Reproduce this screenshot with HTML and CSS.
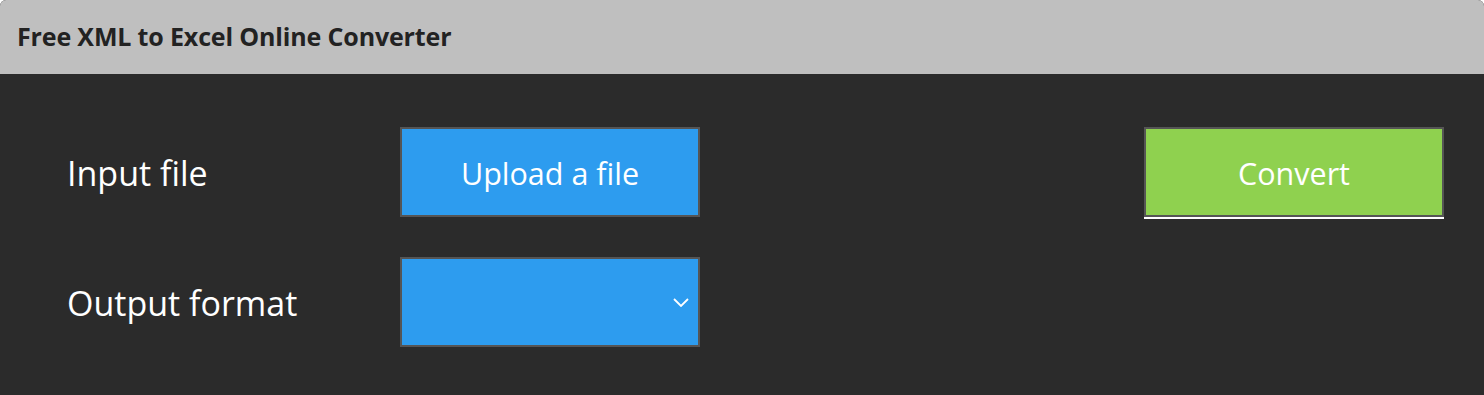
FILE: index.html
```html
<!DOCTYPE html>
<html lang="en">
<head>
  <meta charset="UTF-8" />
  <title>Free XML to Excel Online Converter</title>
  <link rel="stylesheet" href="styles.css">
</head>
<body>
  <div class="panel">
    <header class="panel-header">
      <h1>Free XML to Excel Online Converter</h1>
    </header>

    <div class="panel-body">
      <div class="form-grid">
        <label class="field-label">Input file</label>
        <button class="blue-button">Upload a file</button>

        <label class="field-label">Output format</label>
        <div class="select-box">
          <svg class="chevron" width="16" height="9" viewBox="0 0 16 9">
            <path d="M1 1 L8 8 L15 1" fill="none" stroke="#fff" stroke-width="1.8"/>
          </svg>
        </div>
      </div>

      <button class="convert-button">Convert</button>
    </div>
  </div>
</body>
</html>
```

FILE: styles.css
```css
* {
  margin: 0;
  padding: 0;
  box-sizing: border-box;
}

body {
  font-family: 'Open Sans', 'Noto Sans', sans-serif;
  background-color: #fff;
  width: 1484px;
  height: 395px;
  overflow: hidden;
}

.panel {
  height: 100%;
  background-color: #2b2b2b;
  border-radius: 6px 6px 0 0;
  overflow: hidden;
}

.panel-header {
  height: 74px;
  background-color: #bfbfbf;
  display: flex;
  align-items: center;
  padding-left: 17px;
  padding-bottom: 3px;
}

.panel-header h1 {
  font-size: 25px;
  font-weight: 700;
  color: #222;
  letter-spacing: -0.15px;
}

.panel-body {
  display: flex;
  justify-content: space-between;
  align-items: flex-start;
  padding: 53px 40px 0 67px;
}

.form-grid {
  display: grid;
  grid-template-columns: 333px 300px;
  row-gap: 40px;
  align-items: center;
}

.field-label {
  color: #fff;
  font-size: 34px;
  padding-top: 2px;
}

.blue-button,
.select-box,
.convert-button {
  width: 300px;
  height: 90px;
  border: 2px solid #555;
  color: #fff;
  font-family: inherit;
  font-size: 30.5px;
}

.blue-button {
  background-color: #2d9cef;
  padding-top: 2px;
}

.select-box {
  background-color: #2d9cef;
  display: flex;
  justify-content: flex-end;
  align-items: center;
  padding-right: 9px;
}

.convert-button {
  background-color: #8fd14f;
  box-shadow: 0 2px 0 #fff;
  padding-top: 2px;
}
```
